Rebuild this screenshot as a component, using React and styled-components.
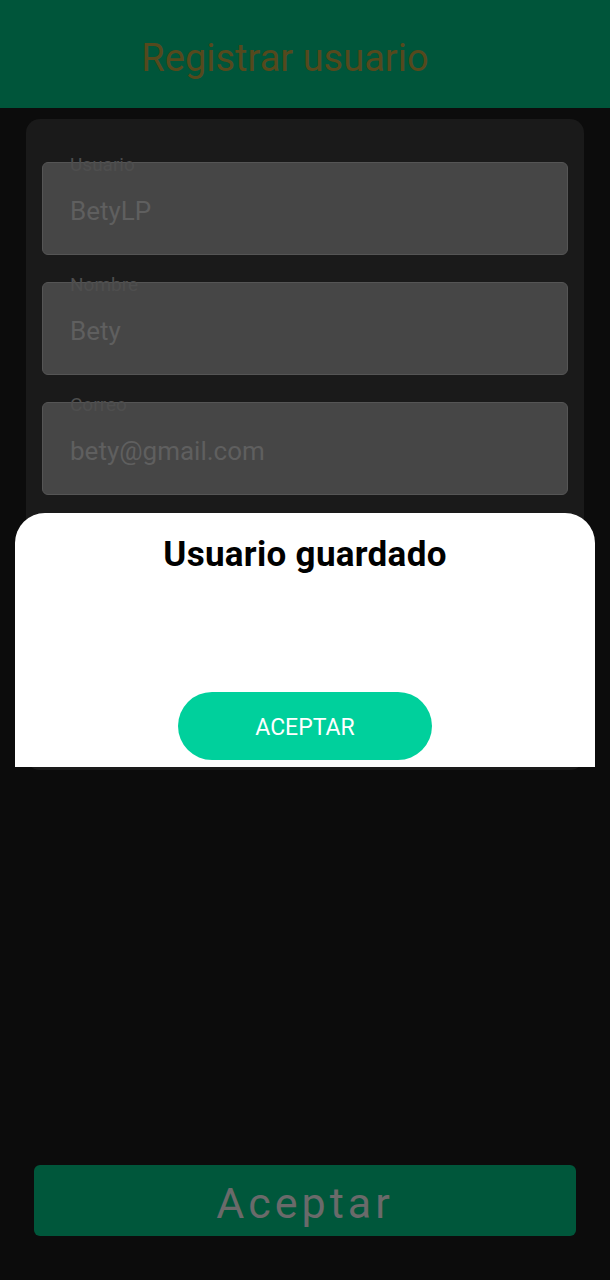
import React from 'react';
import styled, { createGlobalStyle } from 'styled-components';

const GlobalStyle = createGlobalStyle`
  * { box-sizing: border-box; }
  body {
    margin: 0;
    background: #0c0c0c;
    font-family: Roboto, "Noto Sans", sans-serif;
  }
`;

const Screen = styled.div`
  position: relative;
  min-height: 1280px;
  display: flex;
  flex-direction: column;
  background: #0c0c0c;
`;

const Header = styled.header`
  height: 108px;
  background: #00553a;
  display: flex;
  align-items: center;
  justify-content: center;
  padding-right: 40px;
  padding-top: 8px;
`;

const Title = styled.h1`
  margin: 0;
  font-size: 38px;
  font-weight: 400;
  color: #55491d;
`;

const Main = styled.main`
  flex-grow: 1;
  padding: 11px 26px 0;
`;

const Card = styled.section`
  height: 651px;
  background: #1a1a1a;
  border-radius: 14px;
  padding: 43px 16px 0;
  display: flex;
  flex-direction: column;
  gap: 27px;
`;

const Field = styled.div`
  position: relative;
  height: 93px;
  background: #464646;
  border: 1px solid #555;
  border-radius: 6px;
  display: flex;
  align-items: center;
  padding: 5px 27px 0;
`;

const Label = styled.span`
  position: absolute;
  top: -10px;
  left: 27px;
  font-size: 19px;
  color: #4e4e4e;
`;

const Value = styled.span`
  font-size: 26px;
  color: #5f5f5f;
`;

const Footer = styled.div`
  padding: 0 34px 44px;
`;

const SubmitButton = styled.button`
  width: 100%;
  height: 71px;
  border: none;
  border-radius: 6px;
  background: #00573b;
  color: #6a6a6a;
  font-family: inherit;
  font-size: 43px;
  letter-spacing: 4px;
  padding: 4px 0 0;
`;

const Dialog = styled.div`
  position: absolute;
  top: 513px;
  left: 15px;
  width: 580px;
  height: 254px;
  background: #fff;
  border-radius: 30px 30px 0 0;
  display: flex;
  flex-direction: column;
  align-items: center;
  padding-top: 21px;
`;

const DialogTitle = styled.h2`
  margin: 0;
  font-size: 35px;
  font-weight: 700;
  letter-spacing: 0.3px;
  color: #000;
  line-height: 1.2;
`;

const DialogButton = styled.button`
  margin-top: auto;
  margin-bottom: 7px;
  width: 254px;
  height: 68px;
  border: none;
  border-radius: 34px;
  background: #00d09c;
  color: #fff;
  font-family: inherit;
  font-size: 23px;
  padding-top: 3px;
`;

const fields = [
  { label: 'Usuario', value: 'BetyLP' },
  { label: 'Nombre', value: 'Bety' },
  { label: 'Correo', value: 'bety@gmail.com' },
];

const App = () => {
  return (
    <Screen>
      <GlobalStyle />
      <Header>
        <Title>Registrar usuario</Title>
      </Header>
      <Main>
        <Card>
          {fields.map((f) => (
            <Field key={f.label}>
              <Label>{f.label}</Label>
              <Value>{f.value}</Value>
            </Field>
          ))}
        </Card>
      </Main>
      <Footer>
        <SubmitButton>Aceptar</SubmitButton>
      </Footer>
      <Dialog>
        <DialogTitle>Usuario guardado</DialogTitle>
        <DialogButton>ACEPTAR</DialogButton>
      </Dialog>
    </Screen>
  );
};

export default App;
